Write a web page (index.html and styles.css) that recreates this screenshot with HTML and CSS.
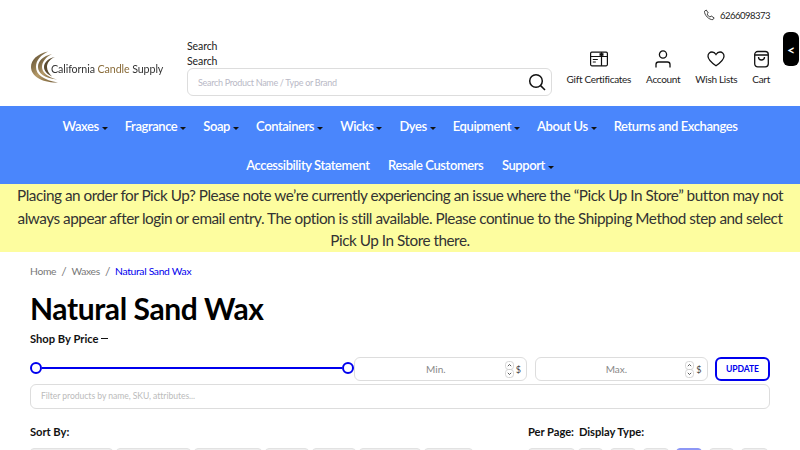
FILE: index.html
```html
<!DOCTYPE html>
<html lang="en">
<head>
<meta charset="utf-8">
<title>Natural Sand Wax</title>
<link rel="stylesheet" href="styles.css">
</head>
<body>
<div class="topbar">
  <svg class="phone" width="12" height="12" viewBox="0 0 24 24" fill="none" stroke="#222" stroke-width="1.7" stroke-linejoin="round"><path d="M3 4.500 6.500 2l4 6-2.200 2c1 3 3 5 6 6l2-2.200 6 4-2.500 3.500C12 22 2.500 12 3 4.500z"/></svg>
  <span>6266098373</span>
</div>
<div class="side-tab">&lt;</div>
<header class="header">
  <div class="logo">
    <svg class="logo-mark" width="32" height="32" viewBox="0 0 32 32" fill="none">
      <defs><linearGradient id="gold" x1="0" y1="0" x2="1" y2="1"><stop offset="0" stop-color="#4f4129"/><stop offset=".5" stop-color="#b59a68"/><stop offset="1" stop-color="#6d5630"/></linearGradient></defs>
      <path d="M17 .5C6 3 0 9 0 16c0 9 11 16 27 15.500C13 29 5 24 5 16 5 9 10 4 17 .5z" fill="url(#gold)"/>
      <path d="M21 3C12 5 7 10 7 16c0 6 6 11 19 12.500C16 26 11 21 11 16c0-5 4-10 10-13z" fill="url(#gold)"/>
      <path d="M24 6c-6 1-11 5-11 10 0 4 3 7 8 9.500-3-3-5-6-5-9.500 0-4 3-8 8-10z" fill="#5a4a30"/>
    </svg>
    <span class="logo-text">California <b>Candle</b> Supply</span>
  </div>
  <div class="search">
    <div class="search-label">Search</div>
    <div class="search-label">Search</div>
    <div class="search-box">
      <span>Search Product Name / Type or Brand</span>
      <svg width="18" height="18" viewBox="0 0 18 18" fill="none" stroke="#111" stroke-width="1.500"><circle cx="8" cy="8" r="6.300"/><path d="m12.600 12.600 4.400 4.400"/></svg>
    </div>
  </div>
  <nav class="tools">
    <div class="tool">
      <svg width="18" height="16" viewBox="0 0 18 16" fill="none" stroke="#111" stroke-width="1.200"><rect x=".6" y="1.200" width="16.800" height="13.600" rx="1.200"/><path d="M.6 5.500h16.800M11.500 1.200v13.600M2.800 8.500h5M2.800 11h3"/><path d="M9.500 2.200h4v2.600h-4z" fill="#111" stroke="none"/></svg>
      <span>Gift Certificates</span>
    </div>
    <div class="tool">
      <svg width="16" height="18" viewBox="0 0 16 18" fill="none" stroke="#111" stroke-width="1.300"><circle cx="8" cy="4.500" r="3.600"/><path d="M1 17.500v-3c0-1.500 1-2.500 2.500-2.500h9c1.500 0 2.500 1 2.500 2.500v3"/></svg>
      <span>Account</span>
    </div>
    <div class="tool">
      <svg width="18" height="16" viewBox="0 0 18 16" fill="none" stroke="#111" stroke-width="1.300"><path d="M9 14.800C3 10.500 1 8 1 5.200 1 2.800 2.800 1 5 1c1.700 0 3.100 1 4 2.500C9.900 2 11.300 1 13 1c2.200 0 4 1.800 4 4.200 0 2.800-2 5.300-8 9.600z"/></svg>
      <span>Wish Lists</span>
    </div>
    <div class="tool">
      <svg width="15" height="17" viewBox="0 0 15 17" fill="none" stroke="#111" stroke-width="1.300"><rect x=".7" y="1" width="13.600" height="15.300" rx="3"/><path d="M1 4.500h13M4.500 6.500c0 4 6 4 6 0"/></svg>
      <span>Cart</span>
    </div>
  </nav>
</header>
<nav class="mainnav">
  <div class="nav-row">
    <a class="nav-item caret">Waxes</a>
    <a class="nav-item caret">Fragrance</a>
    <a class="nav-item caret">Soap</a>
    <a class="nav-item caret">Containers</a>
    <a class="nav-item caret">Wicks</a>
    <a class="nav-item caret">Dyes</a>
    <a class="nav-item caret">Equipment</a>
    <a class="nav-item caret">About Us</a>
    <a class="nav-item">Returns and Exchanges</a>
  </div>
  <div class="nav-row second">
    <a class="nav-item">Accessibility Statement</a>
    <a class="nav-item">Resale Customers</a>
    <a class="nav-item caret">Support</a>
  </div>
</nav>
<div class="notice">Placing an order for Pick Up? Please note we’re currently experiencing an issue where the “Pick Up In Store” button may not always appear after login or email entry. The option is still available. Please continue to the Shipping Method step and select Pick Up In Store there.</div>
<main class="content">
  <div class="crumbs"><a>Home</a><i>/</i><a>Waxes</a><i>/</i><a class="current">Natural Sand Wax</a></div>
  <h1 class="title">Natural Sand Wax</h1>
  <div class="shop-by">Shop By Price <span class="dash"></span></div>
  <div class="price-row">
    <div class="slider"><span class="knob"></span><span class="track"></span><span class="knob"></span></div>
    <div class="price-field"><span class="ph">Min.</span>
      <svg class="spin" width="9" height="17" viewBox="0 0 9 17" fill="none" stroke-width=".8"><rect x=".5" y=".5" width="8" height="8" rx="3" stroke="#ccc"/><rect x=".5" y="8.500" width="8" height="8" rx="3" stroke="#ccc"/><path d="m2.800 5.200 1.700-1.700 1.700 1.700M2.800 11.800l1.700 1.700 1.700-1.700" stroke="#333"/></svg>
      <span class="cur">$</span></div>
    <div class="price-field"><span class="ph">Max.</span>
      <svg class="spin" width="9" height="17" viewBox="0 0 9 17" fill="none" stroke-width=".8"><rect x=".5" y=".5" width="8" height="8" rx="3" stroke="#ccc"/><rect x=".5" y="8.500" width="8" height="8" rx="3" stroke="#ccc"/><path d="m2.800 5.200 1.700-1.700 1.700 1.700M2.800 11.800l1.700 1.700 1.700-1.700" stroke="#333"/></svg>
      <span class="cur">$</span></div>
    <button class="update">UPDATE</button>
  </div>
  <div class="filter">Filter products by name, SKU, attributes...</div>
  <div class="options">
    <div class="opt-label sort">Sort By:</div>
    <div class="opt-label">Per Page:</div>
    <div class="opt-label">Display Type:</div>
  </div>
  <div class="chips">
    <div class="chip-group left">
      <span class="chip w83"></span><span class="chip w75"></span><span class="chip w68"></span><span class="chip w44"></span><span class="chip w44"></span><span class="chip w62"></span><span class="chip w49"></span>
    </div>
    <div class="chip-group">
      <span class="chip w47"></span><span class="chip w25"></span>
    </div>
    <div class="chip-group display">
      <span class="chip w26"></span><span class="chip w26"></span><span class="chip w26 on"></span><span class="chip w25"></span><span class="chip w27"></span>
    </div>
  </div>
</main>
</body>
</html>
```
FILE: styles.css
```css
* { box-sizing: border-box; }
html, body { margin: 0; padding: 0; }
body { width: 800px; height: 450px; overflow: hidden; background: #fff; color: #111; font-family: "Lato", "Open Sans", sans-serif; position: relative; }
.topbar { height: 30px; display: flex; align-items: center; justify-content: flex-end; gap: 4px; padding-right: 30px; font-size: 9.500px; letter-spacing: -.5px; color: #222; }
.phone { margin-right: 1px; }
.side-tab { position: absolute; top: 32px; right: 1px; width: 16px; height: 34px; background: #000; color: #fff; border-radius: 6px; display: flex; align-items: center; justify-content: center; font-size: 14px; font-weight: 700; }
.header { height: 76px; display: flex; align-items: flex-start; padding: 8px 30px 0; }
.logo { flex: none; width: 157px; height: 32px; margin-top: 13px; display: flex; align-items: center; filter: blur(.25px); }
.logo-mark { flex: none; margin-left: 1px; margin-right: -12px; }
.logo-text { font-size: 10.700px; letter-spacing: -.1px; color: #333; white-space: nowrap; position: relative; top: 1px; }
.logo-text b { font-weight: 400; color: #8a6c3a; }
.search { flex: none; width: 365px; font-size: 10.500px; letter-spacing: -.1px; color: #222; }
.search-label { height: 15px; line-height: 17px; }
.search-box { height: 28px; border: 1px solid #ddd; border-radius: 6px; display: flex; align-items: center; justify-content: space-between; padding: 0 5px 0 10px; color: #b9b9c6; font-size: 9px; letter-spacing: -.3px; }
.tools { flex: 1; display: flex; justify-content: flex-end; gap: 15px; margin-top: 12px; font-size: 10px; letter-spacing: -.3px; color: #222; }
.tool { display: flex; flex-direction: column; align-items: center; gap: 5px; white-space: nowrap; }
.tool svg { height: 18px; display: block; }
.mainnav { background: #4a86fc; height: 78px; color: #fff; font-size: 13px; letter-spacing: -.42px; font-weight: 600; }
.nav-row { height: 39px; display: flex; justify-content: center; align-items: center; gap: 17px; }
.second { gap: 18.500px; }
.nav-item { white-space: nowrap; }
.caret::after { content: ""; display: inline-block; width: 0; height: 0; margin-left: 3px; vertical-align: 1px; border: 3px solid transparent; border-top-color: #111; border-bottom: 0; }
.notice { height: 68px; background: #fdfd9f; color: #333; font-size: 15.300px; letter-spacing: -.48px; line-height: 22.600px; text-align: center; padding: 0 10px; }
.content { padding: 0 30px; }
.crumbs { height: 38px; display: flex; align-items: center; font-size: 10.300px; letter-spacing: -.3px; color: #777; }
.crumbs i { font-style: normal; margin: 0 5px; font-size: 12px; }
.crumbs .current { color: #0000ee; }
.title { margin: 4px 0 0; height: 28px; line-height: 28px; font-size: 30px; letter-spacing: -.4px; font-weight: 700; color: #000; }
.shop-by { margin-top: 9px; height: 15px; display: flex; align-items: center; gap: 2px; font-size: 11.200px; font-weight: 700; color: #111; }
.dash { width: 7px; height: 1px; background: #111; }
.price-row { display: flex; align-items: center; height: 24px; margin-top: 11px; }
.slider { flex: none; width: 324px; display: flex; align-items: center; margin-top: -3px; }
.knob { width: 12px; height: 12px; border-radius: 50%; border: 2px solid #0000ee; background: #fff; flex: none; }
.track { flex: 1; height: 2px; background: #0000ee; }
.price-field { flex: none; width: 173px; height: 24px; border: 1px solid #ddd; border-radius: 6px; display: flex; align-items: center; font-size: 10px; color: #888; padding-right: 5px; margin-right: 7.500px; }
.ph { flex: 1; text-align: center; padding-left: 12px; }
.spin { flex: none; margin-right: 2px; }
.cur { font-size: 9px; color: #444; }
.update { flex: none; width: 55px; height: 24px; padding: 0; background: #fff; border: 2px solid #0000ee; border-radius: 6px; color: #0000ee; font: 700 8.600px "Lato", sans-serif; letter-spacing: -.1px; }
.filter { height: 25px; margin-top: 3px; border: 1px solid #ddd; border-radius: 6px; padding-left: 10px; line-height: 23px; font-size: 8.600px; letter-spacing: -.05px; color: #bbb; }
.options { display: flex; margin-top: 15px; gap: 5px; font-size: 11.200px; font-weight: 700; letter-spacing: -.05px; height: 14px; align-items: center; }
.sort { width: 493px; }
.chips { display: flex; margin-top: 10px; }
.chip-group { display: flex; gap: 3px; }
.left { width: 498px; }
.display { gap: 7px; margin-left: 7px; }
.chip { height: 6px; background: #eee; border: 1px solid #e2e2e2; border-radius: 4px 4px 0 0; display: block; }
.chip.on { background: #8d97f5; border-color: #8d97f5; }
.w83 { width: 83px; } .w75 { width: 75px; } .w68 { width: 68px; } .w62 { width: 62px; } .w49 { width: 49px; } .w47 { width: 47px; } .w44 { width: 44px; } .w27 { width: 27px; } .w26 { width: 26px; } .w25 { width: 25px; }
```
